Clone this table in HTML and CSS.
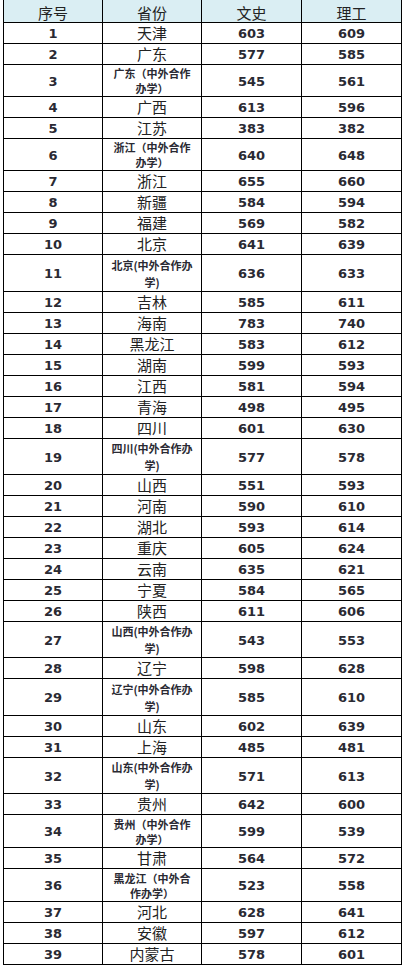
FILE: index.html
```html
<!DOCTYPE html>
<html lang="zh-CN">
<head>
<meta charset="utf-8">
<title>分数线</title>
<link rel="stylesheet" href="styles.css">
</head>
<body>
<div class="sheet">
  <div class="row head"><div class="c">序号</div><div class="c">省份</div><div class="c">文史</div><div class="c">理工</div></div>
  <div class="row"><div class="c num">1</div><div class="c name">天津</div><div class="c num">603</div><div class="c num">609</div></div>
  <div class="row"><div class="c num">2</div><div class="c name">广东</div><div class="c num">577</div><div class="c num">585</div></div>
  <div class="row h32"><div class="c num">3</div><div class="c small full">广东（中外合作<br>办学）</div><div class="c num">545</div><div class="c num">561</div></div>
  <div class="row"><div class="c num">4</div><div class="c name">广西</div><div class="c num">613</div><div class="c num">596</div></div>
  <div class="row"><div class="c num">5</div><div class="c name">江苏</div><div class="c num">383</div><div class="c num">382</div></div>
  <div class="row h32"><div class="c num">6</div><div class="c small full">浙江（中外合作<br>办学）</div><div class="c num">640</div><div class="c num">648</div></div>
  <div class="row"><div class="c num">7</div><div class="c name">浙江</div><div class="c num">655</div><div class="c num">660</div></div>
  <div class="row"><div class="c num">8</div><div class="c name">新疆</div><div class="c num">584</div><div class="c num">594</div></div>
  <div class="row"><div class="c num">9</div><div class="c name">福建</div><div class="c num">569</div><div class="c num">582</div></div>
  <div class="row"><div class="c num">10</div><div class="c name">北京</div><div class="c num">641</div><div class="c num">639</div></div>
  <div class="row h37"><div class="c num">11</div><div class="c small half">北京(中外合作办<br>学)</div><div class="c num">636</div><div class="c num">633</div></div>
  <div class="row"><div class="c num">12</div><div class="c name">吉林</div><div class="c num">585</div><div class="c num">611</div></div>
  <div class="row"><div class="c num">13</div><div class="c name">海南</div><div class="c num">783</div><div class="c num">740</div></div>
  <div class="row"><div class="c num">14</div><div class="c name">黑龙江</div><div class="c num">583</div><div class="c num">612</div></div>
  <div class="row"><div class="c num">15</div><div class="c name">湖南</div><div class="c num">599</div><div class="c num">593</div></div>
  <div class="row"><div class="c num">16</div><div class="c name">江西</div><div class="c num">581</div><div class="c num">594</div></div>
  <div class="row"><div class="c num">17</div><div class="c name">青海</div><div class="c num">498</div><div class="c num">495</div></div>
  <div class="row"><div class="c num">18</div><div class="c name">四川</div><div class="c num">601</div><div class="c num">630</div></div>
  <div class="row h36"><div class="c num">19</div><div class="c small half">四川(中外合作办<br>学)</div><div class="c num">577</div><div class="c num">578</div></div>
  <div class="row"><div class="c num">20</div><div class="c name">山西</div><div class="c num">551</div><div class="c num">593</div></div>
  <div class="row"><div class="c num">21</div><div class="c name">河南</div><div class="c num">590</div><div class="c num">610</div></div>
  <div class="row"><div class="c num">22</div><div class="c name">湖北</div><div class="c num">593</div><div class="c num">614</div></div>
  <div class="row"><div class="c num">23</div><div class="c name">重庆</div><div class="c num">605</div><div class="c num">624</div></div>
  <div class="row"><div class="c num">24</div><div class="c name">云南</div><div class="c num">635</div><div class="c num">621</div></div>
  <div class="row"><div class="c num">25</div><div class="c name">宁夏</div><div class="c num">584</div><div class="c num">565</div></div>
  <div class="row"><div class="c num">26</div><div class="c name">陕西</div><div class="c num">611</div><div class="c num">606</div></div>
  <div class="row h36"><div class="c num">27</div><div class="c small half">山西(中外合作办<br>学)</div><div class="c num">543</div><div class="c num">553</div></div>
  <div class="row"><div class="c num">28</div><div class="c name">辽宁</div><div class="c num">598</div><div class="c num">628</div></div>
  <div class="row h37"><div class="c num">29</div><div class="c small half">辽宁(中外合作办<br>学)</div><div class="c num">585</div><div class="c num">610</div></div>
  <div class="row"><div class="c num">30</div><div class="c name">山东</div><div class="c num">602</div><div class="c num">639</div></div>
  <div class="row"><div class="c num">31</div><div class="c name">上海</div><div class="c num">485</div><div class="c num">481</div></div>
  <div class="row h36"><div class="c num">32</div><div class="c small half">山东(中外合作办<br>学)</div><div class="c num">571</div><div class="c num">613</div></div>
  <div class="row"><div class="c num">33</div><div class="c name">贵州</div><div class="c num">642</div><div class="c num">600</div></div>
  <div class="row h33"><div class="c num">34</div><div class="c small full">贵州（中外合作<br>办学）</div><div class="c num">599</div><div class="c num">539</div></div>
  <div class="row"><div class="c num">35</div><div class="c name">甘肃</div><div class="c num">564</div><div class="c num">572</div></div>
  <div class="row h33"><div class="c num">36</div><div class="c small full">黑龙江（中外合<br>作办学）</div><div class="c num">523</div><div class="c num">558</div></div>
  <div class="row"><div class="c num">37</div><div class="c name">河北</div><div class="c num">628</div><div class="c num">641</div></div>
  <div class="row"><div class="c num">38</div><div class="c name">安徽</div><div class="c num">597</div><div class="c num">612</div></div>
  <div class="row"><div class="c num">39</div><div class="c name">内蒙古</div><div class="c num">578</div><div class="c num">601</div></div>
</div>
</body>
</html>
```

FILE: styles.css
```css
html, body {
  margin: 0;
  padding: 0;
  background: #ffffff;
}

.sheet {
  margin-left: 3px;
  width: 399px;
  border-left: 1px solid #000;
  box-sizing: border-box;
  color: #222222;
  font-family: "Noto Sans CJK SC", "DejaVu Sans", sans-serif;
}

.row {
  display: grid;
  grid-template-columns: 99px 99px 100px 100px;
  height: 21px;
}

.row.head {
  height: 23px;
  background: #daeef3;
}

.row.h32 { height: 32px; }
.row.h33 { height: 33px; }
.row.h36 { height: 36px; }
.row.h37 { height: 37px; }

.c {
  box-sizing: border-box;
  border-right: 1px solid #000;
  border-bottom: 1px solid #000;
  display: flex;
  align-items: center;
  justify-content: center;
  text-align: center;
  padding-top: 2px;
  overflow: hidden;
  white-space: nowrap;
}

.head .c {
  font-family: "Noto Sans CJK SC", sans-serif;
  font-size: 15px;
  line-height: 18px;
  padding-top: 3px;
}

.num {
  font-family: "DejaVu Sans", "Noto Sans CJK SC", sans-serif;
  font-weight: bold;
  font-size: 13px;
  line-height: 16px;
  color: #2a2a33;
}

.c.name {
  font-size: 15px;
  line-height: 18px;
  padding-top: 0;
}

.small {
  font-family: "Noto Sans CJK SC", sans-serif;
  font-weight: bold;
  font-size: 11px;
  color: #2a2a33;
  padding-top: 1px;
}

.small.full { line-height: 15px; }
.small.half { line-height: 17px; }
```
